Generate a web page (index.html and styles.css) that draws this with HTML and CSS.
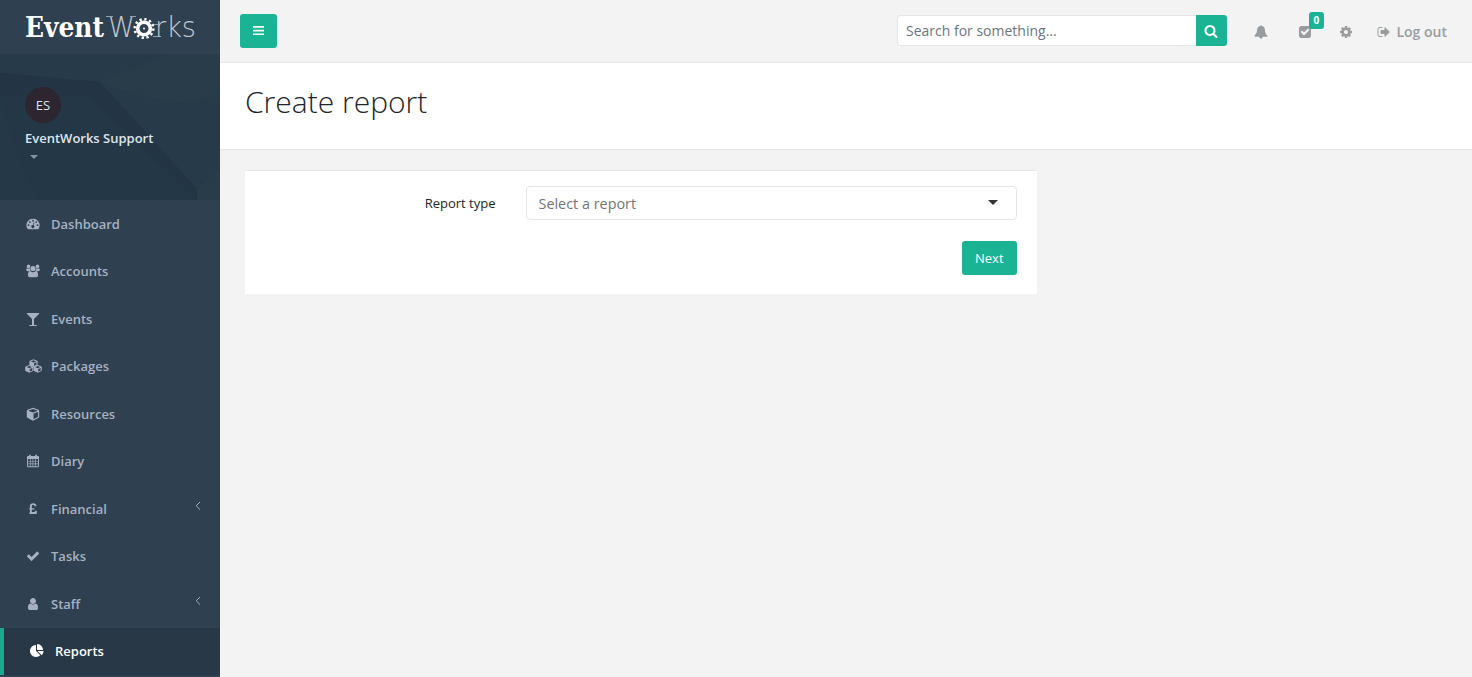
FILE: index.html
```
<!DOCTYPE html>
<html lang="en">
<head>
  <meta charset="UTF-8" />
  <meta name="viewport" content="width=device-width, initial-scale=1.0"/>
  <title>EventWorks | Create report</title>
  <link rel="stylesheet" href="styles.css">
</head>
<body>
  <nav class="sidebar">
    <a class="logo" href="#">
      <svg width="176" height="40" viewBox="0 -6 176 40">
        <text class="logo-bold" x="0" y="25" textLength="79" lengthAdjust="spacingAndGlyphs">Event</text>
        <text class="logo-thin" x="83" y="25" textLength="27" lengthAdjust="spacingAndGlyphs">W</text>
        <path class="logo-serif" d="M81 4.500h7M105 4.500h6M129 12.500h4M128 24.500h8"/>
        <circle cx="119" cy="16.500" r="6.300" fill="none" stroke="#fff" stroke-width="3.600"/>
        <circle cx="119" cy="16.500" r="9.300" fill="none" stroke="#fff" stroke-width="2.600" stroke-dasharray="2.300 2.570"/>
        <circle cx="119" cy="16.500" r="1" fill="#fff"/>
        <text class="logo-thin" x="130" y="25" textLength="41" lengthAdjust="spacingAndGlyphs">rks</text>
      </svg>
    </a>
    <div class="profile">
      <div class="avatar">ES</div>
      <strong class="profile-name">EventWorks Support</strong>
      <span class="caret"></span>
    </div>
    <ul class="menu">
      <li><a href="#">
        <svg class="icon" viewBox="0 0 14 14"><path fill-rule="evenodd" d="M7 1.700a6.600 6.600 0 0 0-5.600 10.100q.2.400.6.400h10q.4 0 .6-.4A6.600 6.600 0 0 0 7 1.700zM2.500 7.300a.9.900 0 1 1 0 1.800.9.900 0 0 1 0-1.800zM3.900 4.200a.9.900 0 1 1 0 1.800.9.900 0 0 1 0-1.800zM7 2.800a.9.900 0 1 1 0 1.800.9.900 0 0 1 0-1.800zM10.200 4.200a.9.900 0 1 1 0 1.800.9.900 0 0 1 0-1.800zM11.500 7.300a.9.900 0 1 1 0 1.800.9.900 0 0 1 0-1.800zM7.700 5.300l.6.200-.7 2.700a1.500 1.500 0 1 1-.7-.2z"/></svg>
        <span>Dashboard</span></a></li>
      <li><a href="#">
        <svg class="icon" viewBox="0 0 14 14"><circle cx="2.500" cy="2.400" r="1.800"/><circle cx="11.500" cy="2.400" r="1.800"/><circle cx="7" cy="4.500" r="2.600"/><path d="M1.200 4.200q1.300.8 2.700.1-.1 1.900 1 3H2Q.2 7.300.2 5.900q0-1.500 1-1.700zM12.800 4.200q-1.300.8-2.700.1.100 1.900-1 3H12q1.800 0 1.800-1.400 0-1.500-1-1.700zM4.300 7.200Q7 9.200 9.700 7.200q2.400.2 2.400 3.700 0 2.300-2 2.300H3.900q-2 0-2-2.300 0-3.500 2.400-3.700z"/></svg>
        <span>Accounts</span></a></li>
      <li><a href="#">
        <svg class="icon" viewBox="0 0 1792 1792"><path d="M1699 186q0 35-43 78l-632 632v768h320q26 0 45 19t19 45-19 45-45 19h-896q-26 0-45-19t-19-45 19-45 45-19h320v-768l-632-632q-43-43-43-78 0-23 18-36.500t38-17.500 43-4h1408q23 0 43 4t38 17.500 18 36.500z"/></svg>
        <span>Events</span></a></li>
      <li><a href="#">
        <svg class="icon icon-wide" viewBox="0 0 17 14">
          <g id="cube"><path fill-rule="evenodd" d="M8.500.2l3.600 1.500q.5.200.5.700v3.200q0 .5-.5.800L8.500 8 4.900 6.400q-.5-.3-.5-.8V2.400q0-.5.500-.7zM8.500 1.300L5.900 2.400l2.600 1.100 2.600-1.100zM9 4.300v2.500l2.500-1.100V3.200z"/></g>
          <use href="#cube" x="-4.200" y="5.700"/>
          <use href="#cube" x="4.200" y="5.700"/>
        </svg>
        <span>Packages</span></a></li>
      <li><a href="#">
        <svg class="icon" viewBox="0 0 14 14"><path fill-rule="evenodd" d="M7 .8l5.500 2q.7.300.7 1v6q0 .7-.6 1L7.500 13.500q-.5.300-1 0L1.400 10.800q-.6-.3-.6-1v-6q0-.7.700-1zM7 2L2.100 3.800 7 5.600l4.900-1.800zM7.500 6.600v5.600L12.100 9.700V4.900z"/></svg>
        <span>Resources</span></a></li>
      <li><a href="#">
        <svg class="icon" viewBox="0 0 14 14"><path fill-rule="evenodd" d="M3 2V1.200Q3 .4 3.900.4t.9.800V2h4.400v-.8q0-.8.900-.8t.9.800V2h1q1 0 1 1v9.200q0 1-1 1H2q-1 0-1-1V3q0-1 1-1zM1.900 5v1.900h2V5zM4.600 5v1.900h2V5zM7.300 5v1.900h2V5zM10 5v1.900h2.100V5zM1.900 7.500v2h2v-2zM4.600 7.500v2h2v-2zM7.300 7.500v2h2v-2zM10 7.500v2h2.100v-2zM1.900 10.200v2.100h2v-2.100zM4.600 10.200v2.100h2v-2.100zM7.300 10.200v2.100h2v-2.100zM10 10.200v2.100h2.100v-2.100z"/></svg>
        <span>Diary</span></a></li>
      <li><a href="#">
        <svg class="icon" viewBox="0 0 14 14"><path d="M10.500 4.300H8.500q0-1.500-1.300-1.500-1.400 0-1.400 1.600v1.800h2.600v1.400H5.800v2.500h3V8.800h2V12H3.400v-1.500h.5V7.600h-.6V6.200h.6V4.300Q3.900 1.200 7.200 1.200q3.300 0 3.300 3.100z"/></svg>
        <span>Financial</span>
        <svg class="arrow" viewBox="0 0 6 10"><path d="M5 1L1.200 4.800 5 8.600"/></svg></a></li>
      <li><a href="#">
        <svg class="icon" viewBox="0 0 1792 1792"><path d="M1671 566q0 40-28 68l-724 724-136 136q-28 28-68 28t-68-28l-136-136-362-362q-28-28-28-68t28-68l136-136q28-28 68-28t68 28l294 295 656-657q28-28 68-28t68 28l136 136q28 28 28 68z"/></svg>
        <span>Tasks</span></a></li>
      <li><a href="#">
        <svg class="icon" viewBox="0 0 1792 1792"><path d="M1536 1399q0 109-62.500 187t-150.500 78h-854q-88 0-150.500-78t-62.500-187q0-85 8.500-160.500t31.500-152 58.500-131 94-89 134.500-34.500q131 128 313 128t313-128q76 0 134.500 34.500t94 89 58.500 131 31.500 152 8.500 160.500zm-256-887q0 159-112.500 271.500t-271.500 112.500-271.500-112.500-112.500-271.500 112.500-271.500 271.500-112.500 271.500 112.500 112.500 271.500z"/></svg>
        <span>Staff</span>
        <svg class="arrow" viewBox="0 0 6 10"><path d="M5 1L1.200 4.800 5 8.600"/></svg></a></li>
      <li class="active"><a href="#">
        <svg class="icon" viewBox="0 0 1792 1792"><path d="M768 890l546 546q-106 108-247.500 168t-298.500 60q-209 0-385.500-103t-279.500-279.500-103-385.500 103-385.500 279.500-279.500 385.500-103v762zm187 6h773q0 157-60 298.500t-168 247.500zm709-128h-768v-768q209 0 385.500 103t279.500 279.500 103 385.500z"/></svg>
        <span>Reports</span></a></li>
    </ul>
  </nav>

  <div class="page">
    <header class="topbar">
      <button class="btn toggle" aria-label="Toggle menu">
        <svg width="11" height="11" viewBox="0 0 11 11"><path d="M0 1h11v1.700H0zM0 4.700h11v1.700H0zM0 8.400h11v1.700H0z"/></svg>
      </button>
      <form class="search">
        <input type="text" placeholder="Search for something...">
        <button class="btn" type="button" aria-label="Search">
          <svg width="14" height="14" viewBox="0 0 1792 1792"><path d="M1216 832q0-185-131.500-316.500t-316.500-131.500-316.500 131.500-131.500 316.500 131.500 316.500 316.500 131.500 316.500-131.500 131.500-316.500zm512 832q0 52-38 90t-90 38q-54 0-90-38l-343-342q-179 124-399 124-143 0-273.500-55.500t-225-150-150-225-55.500-273.500 55.500-273.500 150-225 225-150 273.500-55.500 273.500 55.500 225 150 150 225 55.500 273.500q0 220-124 399l343 343q37 37 37 90z"/></svg>
        </button>
      </form>
      <div class="top-links">
        <a class="bell" href="#"><svg class="icon" viewBox="0 0 14 14"><path d="M7 .2q.8 0 .8.900 3.100.5 3.100 3.900 0 3.900 2.700 5.700 0 1-.9 1H8.700q0 1.900-1.700 1.900t-1.700-1.900h-4q-.9 0-.9-1Q3.100 8.900 3.100 5q0-3.400 3.100-3.900 0-.9.800-.9z"/></svg></a>
        <a class="todo" href="#"><svg class="icon" viewBox="0 0 1792 1792"><path d="M813 1299l614-614q19-19 19-45t-19-45l-102-102q-19-19-45-19t-45 19l-467 467-211-211q-19-19-45-19t-45 19l-102 102q-19 19-19 45t19 45l358 358q19 19 45 19t45-19zm851-883v960q0 119-84.500 203.500t-203.500 84.500h-960q-119 0-203.500-84.500t-84.500-203.500v-960q0-119 84.500-203.500t203.500-84.500h960q119 0 203.500 84.500t84.500 203.500z"/></svg><span class="badge">0</span></a>
        <a class="cog" href="#"><svg class="icon" viewBox="0 0 1792 1792"><path d="M1152 896q0-106-75-181t-181-75-181 75-75 181 75 181 181 75 181-75 75-181zm512-109v222q0 12-8 23t-20 13l-185 28q-19 54-39 91 35 50 107 138 10 12 10 25t-9 23q-27 37-99 108t-94 71q-12 0-26-9l-138-108q-44 23-91 38-16 136-29 186-7 28-36 28h-222q-14 0-24.500-8.500t-11.500-21.500l-28-184q-49-16-90-37l-141 107q-10 9-25 9-14 0-25-11-126-114-165-168-7-10-7-23 0-12 8-23 15-21 51-66.500t54-70.500q-27-50-41-99l-183-27q-13-2-21-12.500t-8-23.500v-222q0-12 8-23t19-13l186-28q14-46 39-92-40-57-107-138-10-12-10-24 0-10 9-23 26-36 98.500-107.500t94.500-71.500q13 0 26 10l138 107q44-23 91-38 16-136 29-186 7-28 36-28h222q14 0 24.500 8.500t11.500 21.500l28 184q49 16 90 37l142-107q9-9 24-9 13 0 25 10 129 119 165 170 7 8 7 22 0 12-8 23-15 21-51 66.500t-54 70.500q26 50 41 98l183 28q13 2 21 12.500t8 23.500z"/></svg></a>
        <a class="logout" href="#"><svg class="icon" viewBox="0 0 1792 1792"><path d="M704 1440q0 4 1 20t.5 26.500-3 23.500-10 19.500-20.500 6.500h-320q-119 0-203.500-84.500t-84.500-203.500v-704q0-119 84.500-203.500t203.500-84.500h320q13 0 22.500 9.500t9.500 22.500q0 4 1 20t.5 26.500-3 23.500-10 19.500-20.500 6.500h-320q-66 0-113 47t-47 113v704q0 66 47 113t113 47h312l11.500 1 11.500 3 8 5.500 7 9 2 13.500zm928-544q0 26-19 45l-544 544q-19 19-45 19t-45-19-19-45v-288h-448q-26 0-45-19t-19-45v-384q0-26 19-45t45-19h448v-288q0-26 19-45t45-19 45 19l544 544q19 19 19 45z"/></svg><span>Log out</span></a>
      </div>
    </header>

    <div class="heading">
      <h2>Create report</h2>
    </div>

    <main class="content">
      <form class="panel">
        <div class="row">
          <label>Report type</label>
          <div class="select"><span>Select a report</span><i class="select-caret"></i></div>
        </div>
        <div class="actions">
          <button class="btn next" type="button">Next</button>
        </div>
      </form>
    </main>
  </div>
</body>
</html>
```
FILE: styles.css
```
* {
  box-sizing: border-box;
}
body {
  margin: 0;
  display: flex;
  height: 100vh;
  overflow: hidden;
  background: #2f4050;
  font-family: "Open Sans", sans-serif;
  font-size: 13px;
  color: #212529;
}
a {
  text-decoration: none;
  color: inherit;
}
.icon {
  width: 14px;
  height: 14px;
  fill: currentColor;
  flex: none;
}

/* sidebar */
.sidebar {
  width: 220px;
  flex: none;
}
.logo {
  display: block;
  height: 54px;
  padding: 6px 0 0 25px;
}
.logo svg {
  display: block;
}
.logo-bold {
  font: bold 28px "DejaVu Serif", serif;
  fill: #fff;
}
.logo-thin {
  font: 200 28px "DejaVu Sans Light", "DejaVu Sans", sans-serif;
  fill: #c3c9ce;
}
.logo-serif {
  stroke: #97a0a8;
}
.profile {
  height: 146px;
  padding: 33px 25px 0;
  background: #243747 url("data:image/svg+xml,%3Csvg xmlns='http://www.w3.org/2000/svg' width='220' height='146'%3E%3Cpath fill='%23273a49' d='M0 0H120L100 28 0 19zM100 28L120 0H220V114L197 135z'/%3E%3Cpath fill='%23293c4a' d='M100 28L165 0H220V40Q180 60 100 28zM197 135L220 114V146H197z'/%3E%3Cpath fill='%23233545' d='M0 19L100 28 197 135V146L90 42 0 42z'/%3E%3Cpath fill='%23253848' d='M0 42L26 125 0 146zM26 125L40 146H0z'/%3E%3C/svg%3E") no-repeat;
}
.avatar {
  width: 36px;
  height: 36px;
  border-radius: 50%;
  background: #2d2630;
  color: #dfe4ed;
  line-height: 36px;
  text-align: center;
}
.profile-name {
  display: block;
  margin-top: 5px;
  line-height: 20px;
  font-weight: 600;
  color: #dfe4ed;
}
.caret {
  display: block;
  width: 0;
  margin: 7px 0 0 4.5px;
  border: 4px solid transparent;
  border-top-color: #8095a8;
  border-bottom: 0;
}
.menu {
  list-style: none;
  margin: 0;
  padding: 0;
}
.menu a {
  display: flex;
  align-items: center;
  height: 47.5px;
  padding: 0 19px 0 26px;
  color: #a7b1c2;
  font-weight: 600;
}
.menu span {
  margin-left: 11px;
}
.menu .icon-wide {
  width: 17px;
  margin: 0 -1.5px;
}
.arrow {
  width: 6px;
  height: 10px;
  margin: -6px 0 0 auto;
  fill: none;
  stroke: #a7b1c2;
}
.menu .active {
  background: #293846;
  border-left: 4px solid #19aa8d;
}
.menu .active a {
  color: #fff;
}

/* top bar */
.page {
  flex: 1;
  background: #f3f3f3;
}
.topbar {
  display: flex;
  height: 63px;
  padding: 14px 25px 0 20px;
  border-bottom: 1px solid #e7e7e7;
}
.btn {
  display: flex;
  align-items: center;
  justify-content: center;
  padding: 0;
  border: 0;
  border-radius: 3px;
  background: #1ab394;
  color: #fff;
  fill: #fff;
  font-family: inherit;
}
.toggle {
  width: 37px;
  height: 33.5px;
}
.search {
  display: flex;
  width: 330px;
  height: 31px;
  margin: 1px 0 0 auto;
}
.search input {
  flex: 1;
  min-width: 0;
  padding: 0 8px;
  border: 1px solid #e5e6e7;
  border-right: 0;
  border-radius: 3px 0 0 3px;
  background: #fff;
  font: 14px "Open Sans", sans-serif;
}
.search input::placeholder {
  color: #6c757d;
}
.search .btn {
  width: 31px;
  border-radius: 0 3px 3px 0;
}
.top-links {
  display: flex;
  align-items: center;
  height: 35px;
  margin-left: 27px;
  color: #999c9e;
  font-size: 14px;
  font-weight: 600;
}
.top-links a {
  display: flex;
  align-items: center;
}
.top-links .todo {
  position: relative;
  margin-left: 30px;
}
.top-links .cog {
  margin-left: 27px;
}
.logout {
  margin-left: 24px;
}
.logout span {
  margin-left: 5.5px;
}
.badge {
  position: absolute;
  top: -13px;
  left: 11px;
  width: 15px;
  height: 17px;
  border-radius: 3px;
  background: #1ab394;
  color: #fff;
  font-size: 10px;
  font-weight: 700;
  line-height: 17px;
  text-align: center;
}

/* page */
.heading {
  height: 87px;
  padding: 20px 25px 0;
  background: #fff;
  border-bottom: 1px solid #e7e7e7;
}
.heading h2 {
  margin: 0;
  font-size: 30px;
  font-weight: 300;
  line-height: 38px;
}
.content {
  padding: 20px 25px;
}
.panel {
  width: 792px;
  height: 124px;
  padding: 15px 20.5px 15px 20px;
  background: #fff;
  border-top: 1px solid #e7e7e7;
}
.row {
  display: flex;
  align-items: center;
  justify-content: flex-end;
  gap: 30px;
}
.select {
  display: flex;
  align-items: center;
  justify-content: space-between;
  width: 491px;
  height: 34px;
  padding: 0 17.5px 0 12px;
  border: 1px solid #e5e6e7;
  border-radius: 4px;
  font-size: 14.4px;
  color: #757575;
}
.select-caret {
  margin-top: -2px;
  border: 5px solid transparent;
  border-top-color: #333;
  border-bottom: 0;
}
.actions {
  display: flex;
  justify-content: flex-end;
  margin-top: 21px;
}
.next {
  width: 54.5px;
  height: 33.5px;
  font-size: 13px;
}
```
